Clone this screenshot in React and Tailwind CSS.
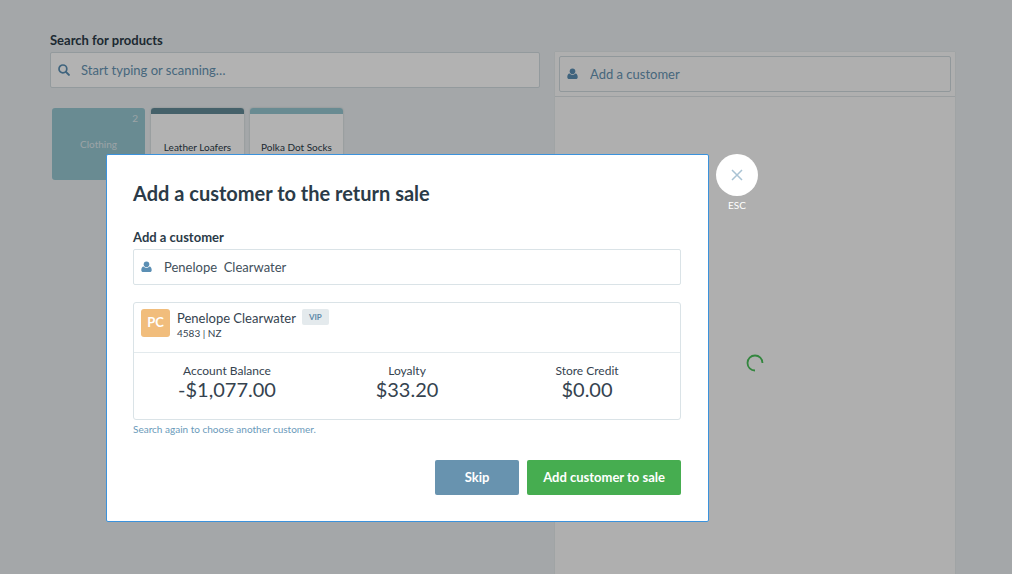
import React from "react";

function UserIcon({ className }) {
  return (
    <svg viewBox="0 0 11 12" className={className} fill="currentColor" aria-hidden="true">
      <circle cx="5.5" cy="3.2" r="2.8" />
      <path d="M2.6 5.400C1 5.600.3 7 .3 9c0 1.500.7 2.100 1.900 2.100h6.600c1.200 0 1.900-.6 1.900-2.100 0-2-.7-3.400-2.300-3.600C7.600 6.200 6.600 6.700 5.500 6.700S3.400 6.200 2.600 5.400z" />
    </svg>
  );
}

function SearchIcon({ className }) {
  return (
    <svg viewBox="0 0 12 12" className={className} fill="none" stroke="currentColor" aria-hidden="true">
      <circle cx="4.900" cy="4.900" r="3.900" strokeWidth="1.700" />
      <path d="M7.900 7.900l3 3" strokeWidth="2" strokeLinecap="round" />
    </svg>
  );
}

function Field({ id, icon, className, ...props }) {
  return (
    <div className="relative">
      <span className="pointer-events-none absolute inset-y-0 left-2 flex items-center text-[#5b8fb4]">{icon}</span>
      <input
        id={id}
        className={`block h-9 w-full rounded-[2px] border pl-[30px] pr-3 text-[13px] outline-none ${className}`}
        {...props}
      />
    </div>
  );
}

const products = [
  { name: "Leather Loafers", bar: "bg-[#638c99]" },
  { name: "Polka Dot Socks", bar: "bg-[#97c7d2]" },
];

const balances = [
  { label: "Account Balance", value: "-$1,077.00" },
  { label: "Loyalty", value: "$33.20" },
  { label: "Store Credit", value: "$0.00" },
];

function SalePage() {
  return (
    <div className="grid min-h-screen grid-cols-[490fr_400fr] gap-[15px] pl-[50px] pr-[57px]">
      <section className="pt-8">
        <label htmlFor="products" className="mb-1 block text-[13px] leading-4 font-bold">
          Search for products
        </label>
        <Field
          id="products"
          placeholder="Start typing or scanning…"
          icon={<SearchIcon className="h-3 w-3" />}
          className="border-[#d3dde1] bg-white placeholder:text-[#6694b3]"
        />
        <div className="mt-5 flex gap-[6px] pl-[2px] text-[10px]">
          <button className="relative h-[72px] w-[93px] rounded-[3px] bg-[#97c7d2] text-[#dfeaee]">
            <span className="absolute top-1 right-[7px] leading-3">2</span>
            Clothing
          </button>
          {products.map((p) => (
            <button key={p.name} className="flex h-[72px] w-[93px] flex-col overflow-hidden rounded-[3px] bg-white shadow-[0_0_2px_#b5c0c5]">
              <span className={`h-[6px] w-full ${p.bar}`} />
              <span className="w-full pt-[25px] text-center leading-4 whitespace-nowrap">{p.name}</span>
            </button>
          ))}
        </div>
      </section>
      <section className="mt-[52px] flex flex-col bg-[#fbfbfb] shadow-[0_0_1px_#c8d2d6]">
        <div className="border-b border-[#dde3e5] p-1">
          <Field
            id="sale-customer"
            aria-label="Add a customer"
            placeholder="Add a customer"
            icon={<UserIcon className="h-3 w-[11px]" />}
            className="border-[#d0dade] bg-[#fbfbfb] placeholder:text-[#6694b3]"
          />
        </div>
        <div className="flex flex-1 items-center justify-center pt-[55px]">
          <svg viewBox="0 0 18 18" className="h-[18px] w-[18px]" fill="none" role="img" aria-label="Loading">
            <path d="M16.500 9A7.500 7.500 0 1 0 9 16.500" stroke="#4ac05a" strokeWidth="1.800" />
          </svg>
        </div>
      </section>
    </div>
  );
}

function CustomerDialog() {
  return (
    <div
      role="dialog"
      aria-modal="true"
      aria-labelledby="dialog-title"
      className="w-full max-w-[603px] rounded-[2px] border border-[#3b92dc] bg-white pt-6 pr-[27px] pb-[26px] pl-[26px]"
    >
      <h1 id="dialog-title" className="text-[20px] leading-7 font-bold">
        Add a customer to the return sale
      </h1>
      <label htmlFor="customer" className="mt-[22px] mb-1 block text-[13px] leading-4 font-bold">
        Add a customer
      </label>
      <Field
        id="customer"
        defaultValue="Penelope  Clearwater"
        icon={<UserIcon className="h-3 w-[11px]" />}
        className="border-[#dae3e7] bg-white text-[#42505b]"
      />
      <div className="mt-[17px] rounded-[3px] border border-[#dae3e7] text-[#35434f]">
        <div className="flex h-[50px] gap-[7px] border-b border-[#e3eaed] px-[7px] pt-[6px]">
          <div className="flex h-7 w-[29px] items-center justify-center rounded-[3px] bg-[#f1bd7c] text-[13px] font-bold text-white">
            PC
          </div>
          <div>
            <div className="flex gap-[6px]">
              <span className="text-[13px] leading-[18px]">Penelope Clearwater</span>
              <span className="flex h-4 items-center rounded-[2px] bg-[#e4eaed] px-[7px] text-[8px] font-bold text-[#5c89a8]">VIP</span>
            </div>
            <div className="text-[10px] leading-3">4583 | NZ</div>
          </div>
        </div>
        <dl className="grid grid-cols-3 px-[3px] pt-[10px] pb-5 text-center">
          {balances.map((b) => (
            <div key={b.label}>
              <dt className="text-[12px] leading-4">{b.label}</dt>
              <dd className="text-[20px] leading-5">{b.value}</dd>
            </div>
          ))}
        </dl>
      </div>
      <a href="#customer" className="mt-[3px] block text-[10px] leading-3 text-[#6a9aba]">
        Search again to choose another customer.
      </a>
      <div className="mt-[25px] flex justify-end gap-2 text-[13px] font-bold text-white">
        <button className="h-[35px] w-[84px] rounded-[2px] bg-[#6893af]">Skip</button>
        <button className="h-[35px] rounded-[2px] bg-[#46ad50] px-4">Add customer to sale</button>
      </div>
    </div>
  );
}

export default function App() {
  return (
    <div className="relative min-h-screen overflow-hidden bg-[#ebf0f2] font-['Lato','Noto_Sans',sans-serif] text-[#2b3b48]">
      <SalePage />
      <div className="absolute inset-0 flex items-start gap-[7px] bg-black/30 pt-[154px] pr-4 pl-[106px]">
        <CustomerDialog />
        <div className="flex shrink-0 flex-col items-center text-white">
          <button aria-label="Close" className="flex h-[42px] w-[42px] items-center justify-center rounded-full bg-white text-[#a9c3d4]">
            <svg viewBox="0 0 12 12" className="h-3 w-3" fill="none" stroke="currentColor" strokeWidth="1.500">
              <path d="M1 1l10 10M11 1L1 11" />
            </svg>
          </button>
          <span className="mt-[3px] text-[10px] leading-3">ESC</span>
        </div>
      </div>
    </div>
  );
}
